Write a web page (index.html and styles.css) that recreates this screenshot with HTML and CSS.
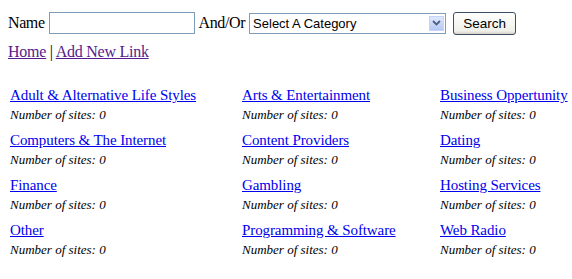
FILE: index.html
```html
<!DOCTYPE html>
<html lang="en">
<head>
    <meta charset="UTF-8">
    <title>Link Directory</title>
    <link rel="stylesheet" href="styles.css">
</head>
<body>

    <!-- Search form -->
    <form class="search-form">
        <label>Name</label>
        <input type="text" class="name-input">
        <label>And/Or</label>
        <span class="select-box">
            <span class="select-text">Select A Category</span>
            <span class="select-arrow">
                <svg width="9" height="6" viewBox="0 0 9 6"><path d="M1 1 L4.5 4.5 L8 1" fill="none" stroke="#4d6185" stroke-width="1.8"/></svg>
            </span>
        </span>
        <button type="button" class="search-btn">Search</button>
    </form>

    <div class="nav">
        <a href="#" class="visited">Home</a> | <a href="#" class="visited">Add New Link</a>
    </div>

    <!-- Categories -->
    <div class="categories">
        <div class="cat"><a href="#">Adult &amp; Alternative Life Styles</a><i>Number of sites: 0</i></div>
        <div class="cat"><a href="#">Arts &amp; Entertainment</a><i>Number of sites: 0</i></div>
        <div class="cat"><a href="#">Business Oppertunity</a><i>Number of sites: 0</i></div>
        <div class="cat"><a href="#">Computers &amp; The Internet</a><i>Number of sites: 0</i></div>
        <div class="cat"><a href="#">Content Providers</a><i>Number of sites: 0</i></div>
        <div class="cat"><a href="#">Dating</a><i>Number of sites: 0</i></div>
        <div class="cat"><a href="#">Finance</a><i>Number of sites: 0</i></div>
        <div class="cat"><a href="#">Gambling</a><i>Number of sites: 0</i></div>
        <div class="cat"><a href="#">Hosting Services</a><i>Number of sites: 0</i></div>
        <div class="cat"><a href="#">Other</a><i>Number of sites: 0</i></div>
        <div class="cat"><a href="#">Programming &amp; Software</a><i>Number of sites: 0</i></div>
        <div class="cat"><a href="#">Web Radio</a><i>Number of sites: 0</i></div>
    </div>

</body>
</html>
```

FILE: styles.css
```css
/* Page basics */
body {
    font-family: "Liberation Serif", "Times New Roman", serif;
    font-size: 16px;
    margin: 8px 0 0 8px;
    color: #000;
    background: #fff;
}

a {
    color: #0000ee;
}

a.visited {
    color: #551a8b;
}

/* Search form row */
.search-form {
    display: flex;
    align-items: center;
    margin: 4px 0 0 0;
    height: 22px;
    letter-spacing: -0.4px;
}

.name-input {
    width: 140px;
    height: 16px;
    border: 1px solid #7f9db9;
    padding: 2px;
    margin: 0 4px 0 4px;
}

.select-box {
    display: flex;
    align-items: center;
    width: 195px;
    height: 19px;
    border: 1px solid #7f9db9;
    margin-left: 4px;
    font-family: "Liberation Sans", Arial, sans-serif;
    font-size: 13px;
    letter-spacing: 0;
    justify-content: space-between;
}

.select-text {
    padding-left: 3px;
}

.select-arrow {
    width: 15px;
    height: 15px;
    margin-right: 1px;
    background: linear-gradient(#dde8fc, #b7c9f3);
    border: 1px solid #c3d3fd;
    box-sizing: border-box;
    display: flex;
    align-items: center;
    justify-content: center;
}

.search-btn {
    font-family: "Liberation Sans", Arial, sans-serif;
    font-size: 13.5px;
    letter-spacing: 0;
    margin-left: 7px;
    width: 63px;
    height: 23px;
    border: 1px solid #3c4f66;
    border-radius: 3px;
    background: linear-gradient(#fefefe, #f0f0ea 85%, #d6d0c5);
    padding: 0;
}

/* Nav links */
.nav {
    margin-top: 9px;
    line-height: 18px;
    letter-spacing: -0.25px;
}

/* Category grid */
.categories {
    display: grid;
    grid-template-columns: 232px 198px 1fr;
    grid-auto-rows: 45px;
    margin: 25px 0 0 2px;
    white-space: nowrap;
}

.cat a {
    display: block;
    font-size: 15px;
    line-height: 19px;
    letter-spacing: -0.1px;
}

.cat i {
    display: block;
    font-size: 13px;
    line-height: 15px;
    margin-top: 2px;
}
```
